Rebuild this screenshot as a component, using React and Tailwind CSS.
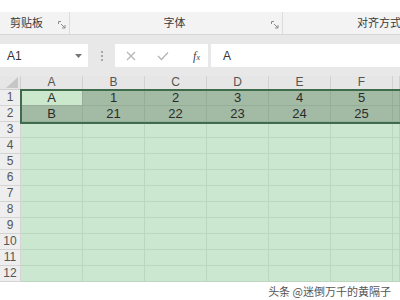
import React from 'react';

const cols = ['A', 'B', 'C', 'D', 'E', 'F', ''];
const data = {
  1: ['A', '1', '2', '3', '4', '5', ''],
  2: ['B', '21', '22', '23', '24', '25', ''],
};
const rows = [1, 2, 3, 4, 5, 6, 7, 8, 9, 10, 11, 12];

function Launcher() {
  return (
    <svg width="8" height="8" viewBox="0 0 8 8" className="shrink-0">
      <path d="M0.5 3V0.5H3" stroke="#8a8a8a" fill="none" />
      <path d="M3 3L7 7M7 4V7H4" stroke="#8a8a8a" fill="none" />
    </svg>
  );
}

function Ribbon() {
  return (
    <div className="flex h-[23px] bg-[#f3f3f3] border-b border-[#d6d6d6] text-[11px] text-[#3a3a3a] whitespace-nowrap">
      <div className="flex w-[70px] items-center border-r border-[#dcdcdc] pl-[10px] pr-[3px]">
        <span className="flex-1">剪贴板</span>
        <div className="mt-[4px]"><Launcher /></div>
      </div>
      <div className="flex w-[213px] items-center border-r border-[#dcdcdc] pr-[3px]">
        <span className="flex-1 text-center pl-[8px]">字体</span>
        <div className="mt-[4px]"><Launcher /></div>
      </div>
      <div className="flex-1 overflow-hidden flex items-center pl-[74px]">
        <span>对齐方式</span>
      </div>
    </div>
  );
}

function FormulaBar() {
  return (
    <div className="h-[41px] bg-[#e8e8e8] pt-[9px]">
      <div className="flex h-[23px]">
        <div className="w-[88px] bg-white flex items-center pl-[7px] pr-[6px] text-[12px] text-[#333]">
          <span className="flex-1">A1</span>
          <svg width="7" height="4" viewBox="0 0 7 4"><path d="M0 0H7L3.5 4Z" fill="#777" /></svg>
        </div>
        <div className="w-[27px] flex flex-col items-center justify-center gap-[2px]">
          <div className="w-[2px] h-[2px] bg-[#a8a8a8]" />
          <div className="w-[2px] h-[2px] bg-[#a8a8a8]" />
          <div className="w-[2px] h-[2px] bg-[#a8a8a8]" />
        </div>
        <div className="w-[93px] bg-white flex items-center pl-[11px] pr-[8px]">
          <svg width="10" height="10" viewBox="0 0 10 10">
            <path d="M1 1L9 9M9 1L1 9" stroke="#b4b4b4" strokeWidth="1.2" />
          </svg>
          <svg width="12" height="10" viewBox="0 0 12 10" className="ml-[21px]">
            <path d="M1 5L4.5 8.5L11 1.5" stroke="#b4b4b4" strokeWidth="1.3" fill="none" />
          </svg>
          <span className="ml-auto italic text-[12px] text-[#444] font-['Liberation_Serif',serif]">
            f<span className="text-[8px]">x</span>
          </span>
        </div>
        <div className="ml-[3px] flex-1 bg-white flex items-center pl-[12px] text-[12px] text-[#333]">
          A
        </div>
      </div>
    </div>
  );
}

function Grid() {
  return (
    <div className="relative">
      <div className="grid grid-cols-[21px_repeat(6,62px)_1fr] h-[14px] bg-[#e6e6e6] border-b border-[#cfcfcf] text-[12px] leading-[13px] text-[#555]">
        <div className="border-r border-[#cfcfcf] flex items-end justify-end pr-[2px] pb-[1px]">
          <svg width="12" height="11" viewBox="0 0 12 11"><path d="M12 0V11H0Z" fill="#c6c6c6" /></svg>
        </div>
        {cols.map((c, i) => (
          <div key={i} className="border-r border-[#d2d2d2] text-center">{c}</div>
        ))}
      </div>
      {rows.map((r) => (
        <div
          key={r}
          className="grid grid-cols-[21px_repeat(6,62px)_1fr] h-[16px] text-[13px] leading-[15px] text-[#2b2b2b]"
        >
          <div className="bg-[#eeeeee] border-r border-b border-[#d4d4d4] text-center text-[12px] text-[#555]">
            {r}
          </div>
          {cols.map((c, i) => {
            const sel = r <= 2;
            const active = r === 1 && i === 0;
            const bg = active ? 'bg-[#cbe8cd]' : sel ? 'bg-[#a3bba5]' : 'bg-[#cbe7cf]';
            const border = sel ? 'border-[#96ad98]' : 'border-[#bcd6c0]';
            return (
              <div key={i} className={`${bg} border-r border-b ${border} text-center`}>
                {data[r] ? data[r][i] : ''}
              </div>
            );
          })}
        </div>
      ))}
      <div className="absolute left-[20px] right-[-4px] top-[13px] h-[35px] border-2 border-[#3f6c4d]" />
    </div>
  );
}

export default function App() {
  return (
    <div className="relative w-[400px] h-[300px] overflow-hidden bg-white font-['Liberation_Sans','Noto_Sans_CJK_SC',sans-serif]">
      <div className="h-[12px]" />
      <Ribbon />
      <FormulaBar />
      <div className="h-[207px] overflow-hidden">
        <Grid />
      </div>
      <div className="h-[17px] flex items-center justify-end pr-[9px] text-[11px] text-[#555] font-['Noto_Sans_CJK_SC',sans-serif]">
        头条 @迷倒万千的黄隔子
      </div>
    </div>
  );
}
